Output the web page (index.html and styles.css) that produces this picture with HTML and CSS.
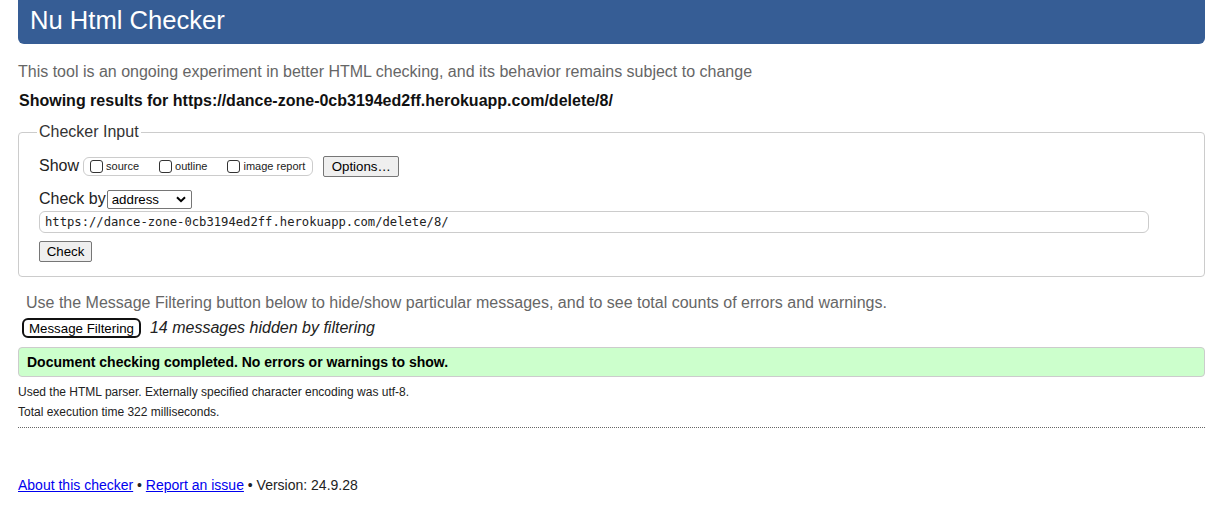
FILE: index.html
```html
<!DOCTYPE html>
<html lang="en">
<head>
<meta charset="utf-8">
<title>Nu Html Checker</title>
<link rel="stylesheet" href="styles.css">
</head>
<body>
<h1 class="title">Nu Html Checker</h1>
<p class="intro">This tool is an ongoing experiment in better HTML checking, and its behavior remains subject to change</p>
<p class="showing">Showing results for https://dance-zone-0cb3194ed2ff.herokuapp.com/delete/8/</p>
<fieldset class="input-box">
  <legend class="legend">Checker Input</legend>
  <div class="row show-row">
    <span class="label">Show</span>
    <span class="opts">
      <label class="opt"><input type="checkbox" class="cb"><span>source</span></label>
      <label class="opt"><input type="checkbox" class="cb"><span>outline</span></label>
      <label class="opt"><input type="checkbox" class="cb"><span>image report</span></label>
    </span>
    <button class="btn options-btn" type="button">Options…</button>
  </div>
  <div class="row checkby-row">
    <span class="label">Check by</span>
    <span class="select-wrap">
      <span class="select">address</span>
      <svg class="chev" width="10" height="7" viewBox="0 0 10 7"><path d="M1 1.2 L5 5.2 L9 1.2" fill="none" stroke="#000" stroke-width="2"/></svg>
    </span>
  </div>
  <div class="url">https://dance-zone-0cb3194ed2ff.herokuapp.com/delete/8/</div>
  <button class="btn check-btn" type="button">Check</button>
</fieldset>
<p class="filter-note">Use the Message Filtering button below to hide/show particular messages, and to see total counts of errors and warnings.</p>
<div class="filter-row">
  <button class="filter-btn" type="button">Message Filtering</button>
  <em class="hidden-count">14 messages hidden by filtering</em>
</div>
<div class="success">Document checking completed. No errors or warnings to show.</div>
<p class="details">Used the HTML parser. Externally specified character encoding was utf-8.</p>
<p class="details">Total execution time 322 milliseconds.</p>
<hr class="sep">
<p class="footer"><a href="#">About this checker</a> • <a href="#">Report an issue</a> • Version: 24.9.28</p>
</body>
</html>
```

FILE: styles.css
```css
html, body {
  margin: 0;
  padding: 0;
  background: #fff;
}
body {
  padding: 0 12px 0 18px;
  font-family: "Liberation Sans", Arial, sans-serif;
  color: #222;
}
.title {
  margin: 0;
  height: 44px;
  line-height: 40px;
  padding-left: 12px;
  background: #365d95;
  color: #fff;
  font-weight: normal;
  font-size: 25.6px;
  border-radius: 0 0 6px 6px;
}
.intro {
  margin: 18px 0 0;
  font-size: 16px;
  line-height: 20px;
  color: #666;
}
.showing {
  margin: 9px 0 0 1px;
  font-size: 16px;
  line-height: 20px;
  font-weight: bold;
  color: #111;
}
.input-box {
  margin: 12px 0 0;
  padding: 14px 20px 14px;
  border: 1px solid #ccc;
  border-radius: 4px;
  min-width: 0;
}
.legend {
  padding: 0 2px;
  margin-left: -2px;
  font-size: 16px;
  color: #333;
}
.row {
  display: flex;
  align-items: center;
}
.label {
  font-size: 16px;
  color: #222;
}
.show-row {
  height: 22px;
}
.opts {
  display: inline-flex;
  align-items: center;
  margin-left: 4px;
  height: 17px;
  padding: 0 7px 0 6px;
  border: 1px solid #ccc;
  border-radius: 6px;
}
.opt {
  display: inline-flex;
  align-items: center;
  font-size: 11px;
  color: #222;
  margin-right: 20px;
}
.opt:last-child {
  margin-right: 0;
}
.cb {
  appearance: none;
  -webkit-appearance: none;
  width: 13px;
  height: 13px;
  margin: 0 3px 0 0;
  border: 1px solid #333;
  border-radius: 3px;
  background: #fff;
}
.btn {
  font-family: "Liberation Sans", Arial, sans-serif;
  font-size: 13.3px;
  color: #000;
  background: #efefef;
  border: 1px solid #767676;
  border-radius: 2px;
  padding: 0 6px;
  height: 21px;
}
.options-btn {
  margin-left: 10px;
  padding: 0 7px;
  width: 76px;
}
.checkby-row {
  margin-top: 12px;
  height: 20px;
}
.select-wrap {
  position: relative;
  display: inline-block;
  margin-left: 1px;
}
.select {
  display: block;
  box-sizing: border-box;
  width: 85px;
  height: 19px;
  line-height: 17px;
  padding-left: 4px;
  border: 1px solid #767676;
  border-radius: 2px;
  font-size: 13.3px;
  color: #000;
}
.chev {
  position: absolute;
  right: 6px;
  top: 6px;
}
.url {
  box-sizing: border-box;
  margin-top: 2px;
  width: 1110px;
  height: 22px;
  line-height: 20px;
  padding-left: 5px;
  border: 1px solid #ccc;
  border-radius: 6px;
  font-family: "DejaVu Sans Mono", "Liberation Mono", monospace;
  font-size: 12.2px;
  color: #222;
}
.check-btn {
  display: block;
  margin-top: 8px;
  width: 53px;
  height: 21px;
}
.filter-note {
  margin: 16px 0 0 8px;
  font-size: 16px;
  line-height: 20px;
  color: #666;
}
.filter-row {
  display: flex;
  align-items: center;
  margin: 5px 0 0 4px;
  height: 20px;
}
.filter-btn {
  box-sizing: border-box;
  height: 20px;
  padding: 0 5px;
  font-family: "Liberation Sans", Arial, sans-serif;
  font-size: 13.3px;
  color: #000;
  background: #fff;
  border: 2px solid #111;
  border-radius: 6px;
}
.hidden-count {
  margin-left: 9px;
  font-size: 16px;
  color: #222;
}
.success {
  margin-top: 9px;
  box-sizing: border-box;
  height: 30px;
  line-height: 28px;
  padding-left: 8px;
  background: #ccffcc;
  border: 1px solid #ccc;
  border-radius: 4px;
  font-size: 14px;
  font-weight: bold;
  color: #000;
}
.details {
  margin: 8px 0 0;
  font-size: 12px;
  line-height: 14px;
  color: #222;
}
.details + .details {
  margin-top: 6px;
}
.sep {
  margin: 8px 0 0;
  border: 0;
  border-top: 1px dotted #666;
  height: 0;
}
.footer {
  margin: 49px 0 0;
  font-size: 14px;
  line-height: 16px;
  color: #222;
}
.footer a {
  color: #00e;
}
```
